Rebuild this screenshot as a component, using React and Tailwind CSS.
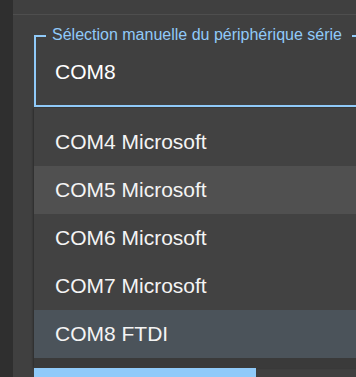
import React from 'react'

const ports = [
  { label: 'COM4 Microsoft', state: '' },
  { label: 'COM5 Microsoft', state: 'hover' },
  { label: 'COM6 Microsoft', state: '' },
  { label: 'COM7 Microsoft', state: '' },
  { label: 'COM8 FTDI', state: 'selected' },
]

function rowBg(state) {
  if (state === 'hover') return 'bg-[#505050]'
  if (state === 'selected') return 'bg-[#4b535a]'
  return ''
}

export default function App() {
  return (
    <div className="w-[356px] h-[377px] overflow-hidden flex bg-[#404040] font-['Liberation_Sans',Arial,sans-serif]">
      <div className="w-[13px] shrink-0 bg-[#2f2f2f]" />
      <div className="flex-1 min-w-0 flex flex-col overflow-hidden">
        <div className="h-[15px] shrink-0 border-b border-[#4e4e4e]" />

        <div className="pl-[21px] pt-[20px]">
          {/* outlined select, focused */}
          <div className="relative w-[340px] h-[72px] border-2 border-[#90caf9]">
            <span className="absolute left-[10px] top-[-11.5px] pl-[6px] pr-[10px] bg-[#404040] text-[16px] leading-[18px] text-[#90caf9] whitespace-nowrap">
              Sélection manuelle du périphérique série
            </span>
            <div className="pl-[19px] pt-[23px] text-[21px] leading-[24px] text-white">COM8</div>
          </div>

          <div className="mt-[1px] w-[340px] bg-[#424242] shadow-[-1px_0_2px_rgba(0,0,0,0.35)] pt-[10px]">
            {ports.map((p) => (
              <div key={p.label} className={`h-[48px] flex items-center pl-[21px] text-[21px] leading-[24px] text-[#f4f4f4] ${rowBg(p.state)}`}>
                {p.label}
              </div>
            ))}
            <div className="h-[10px] bg-[#3a3a3a]" />
          </div>
          <div className="h-[9px] w-[222px] bg-[#90caf9]" />
        </div>
      </div>
    </div>
  )
}
